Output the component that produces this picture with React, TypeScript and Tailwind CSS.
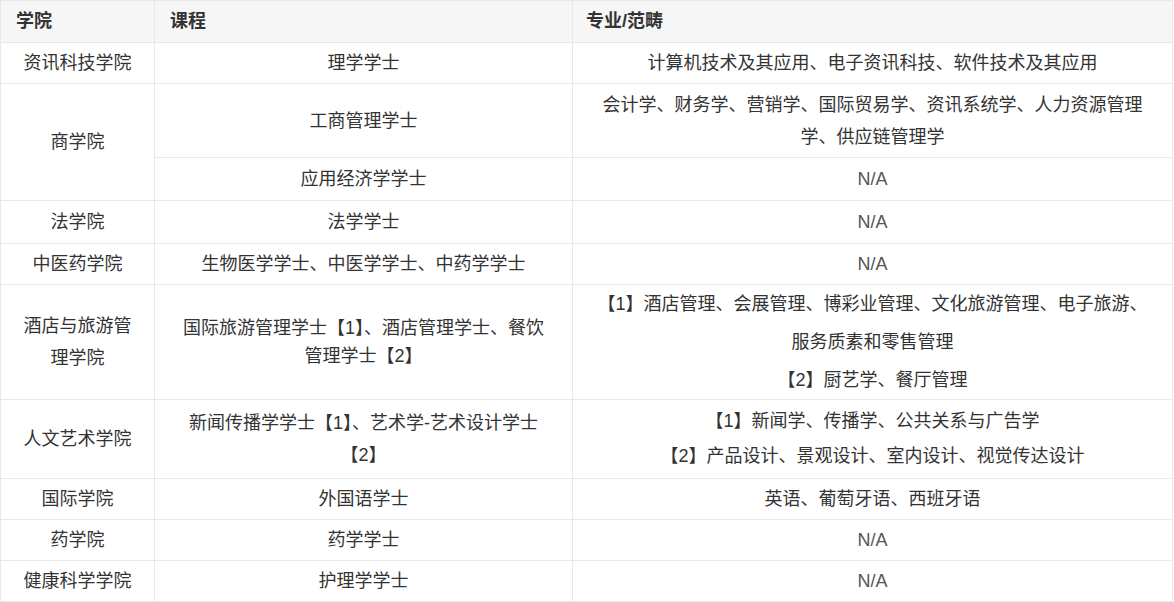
import React from "react";

const font = { fontFamily: '"Liberation Sans", "Noto Sans CJK SC", sans-serif' };

// cell line heights are tuned per row to match the screenshot
const td = "border border-[#e8e8e8] text-center align-middle px-2 py-1 text-[#333333]";

const NA = () => <span className="text-[#555555]">N/A</span>;

export default function App() {
  return (
    <div className="bg-white w-[1174px] h-[602px]" style={font}>
      <table className="table-fixed border-collapse w-[1172px] text-[18px]">
        <colgroup>
          <col className="w-[154px]" />
          <col className="w-[418px]" />
          <col className="w-[600px]" />
        </colgroup>
        <thead>
          <tr className="h-[42px] bg-[#f6f6f6]">
            <th className="border border-[#e8e8e8] text-left pl-[15px] font-bold text-[#333333]">学院</th>
            <th className="border border-[#e8e8e8] text-left pl-[15px] font-bold text-[#333333]">课程</th>
            <th className="border border-[#e8e8e8] text-left pl-[13px] font-bold text-[#333333]">专业/范畴</th>
          </tr>
        </thead>
        <tbody className="leading-[32px]">
          <tr className="h-[41px]">
            <td className={td}>资讯科技学院</td>
            <td className={td}>理学学士</td>
            <td className={td}>计算机技术及其应用、电子资讯科技、软件技术及其应用</td>
          </tr>
          <tr className="h-[74px]">
            <td className={td} rowSpan={2}>商学院</td>
            <td className={td}>工商管理学士</td>
            <td className={`${td} whitespace-nowrap`}>
              会计学、财务学、营销学、国际贸易学、资讯系统学、人力资源管理
              <br />
              学、供应链管理学
            </td>
          </tr>
          <tr className="h-[43px]">
            <td className={td}>应用经济学学士</td>
            <td className={td}><NA /></td>
          </tr>
          <tr className="h-[43px]">
            <td className={td}>法学院</td>
            <td className={td}>法学学士</td>
            <td className={td}><NA /></td>
          </tr>
          <tr className="h-[41px]">
            <td className={td}>中医药学院</td>
            <td className={td}>生物医学学士、中医学学士、中药学学士</td>
            <td className={td}><NA /></td>
          </tr>
          <tr className="h-[115px]">
            <td className={td}>
              酒店与旅游管
              <br />
              理学院
            </td>
            <td className={`${td} leading-[28px] whitespace-nowrap`}>
              国际旅游管理学士【1】、酒店管理学士、餐饮
              <br />
              管理学士【2】
            </td>
            <td className="border border-[#e8e8e8] text-center align-middle px-2 py-0 text-[#333333] leading-[38px] whitespace-nowrap">
              【1】酒店管理、会展管理、博彩业管理、文化旅游管理、电子旅游、
              <br />
              服务质素和零售管理
              <br />
              【2】厨艺学、餐厅管理
            </td>
          </tr>
          <tr className="h-[79px]">
            <td className={td}>人文艺术学院</td>
            <td className={`${td} whitespace-nowrap`}>
              新闻传播学学士【1】、艺术学-艺术设计学士
              <br />
              【2】
            </td>
            <td className={`${td} leading-[35px] whitespace-nowrap`}>
              【1】新闻学、传播学、公共关系与广告学
              <br />
              【2】产品设计、景观设计、室内设计、视觉传达设计
            </td>
          </tr>
          <tr className="h-[41px]">
            <td className={td}>国际学院</td>
            <td className={td}>外国语学士</td>
            <td className={td}>英语、葡萄牙语、西班牙语</td>
          </tr>
          <tr className="h-[40px]">
            <td className={td}>药学院</td>
            <td className={td}>药学学士</td>
            <td className={td}><NA /></td>
          </tr>
          <tr className="h-[41px]">
            <td className={td}>健康科学学院</td>
            <td className={td}>护理学学士</td>
            <td className={td}><NA /></td>
          </tr>
        </tbody>
      </table>
    </div>
  );
}
